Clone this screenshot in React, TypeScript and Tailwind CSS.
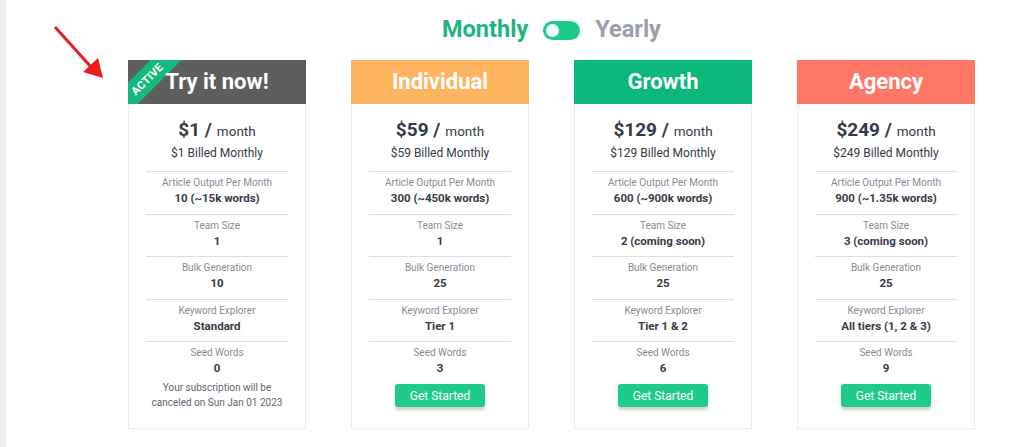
import React from "react";

type Plan = {
  name: string;
  color: string;
  price: string;
  active?: boolean;
  rows: [string, string][];
};

const plans: Plan[] = [
  {
    name: "Try it now!",
    color: "bg-[#5e5e5e]",
    price: "$1",
    active: true,
    rows: [
      ["Article Output Per Month", "10 (~15k words)"],
      ["Team Size", "1"],
      ["Bulk Generation", "10"],
      ["Keyword Explorer", "Standard"],
      ["Seed Words", "0"],
    ],
  },
  {
    name: "Individual",
    color: "bg-[#ffb45f]",
    price: "$59",
    rows: [
      ["Article Output Per Month", "300 (~450k words)"],
      ["Team Size", "1"],
      ["Bulk Generation", "25"],
      ["Keyword Explorer", "Tier 1"],
      ["Seed Words", "3"],
    ],
  },
  {
    name: "Growth",
    color: "bg-[#0cb77c]",
    price: "$129",
    rows: [
      ["Article Output Per Month", "600 (~900k words)"],
      ["Team Size", "2 (coming soon)"],
      ["Bulk Generation", "25"],
      ["Keyword Explorer", "Tier 1 & 2"],
      ["Seed Words", "6"],
    ],
  },
  {
    name: "Agency",
    color: "bg-[#ff7867]",
    price: "$249",
    rows: [
      ["Article Output Per Month", "900 (~1.35k words)"],
      ["Team Size", "3 (coming soon)"],
      ["Bulk Generation", "25"],
      ["Keyword Explorer", "All tiers (1, 2 & 3)"],
      ["Seed Words", "9"],
    ],
  },
];

function Card({ plan }: { plan: Plan }) {
  return (
    <div className="flex flex-col">
      <div
        className={`relative overflow-hidden h-[44px] ${plan.color} flex items-center justify-center`}
      >
        {plan.active && (
          <div className="absolute left-[-31px] top-[8px] w-[100px] h-[22px] bg-[#14b97d] -rotate-45 flex items-center justify-center">
            <span className="text-white text-[11px] font-bold tracking-[0.3px] leading-none">
              ACTIVE
            </span>
          </div>
        )}
        <span className="relative text-white font-bold text-[22px] leading-none">
          {plan.name}
        </span>
      </div>
      <div className="flex-1 border border-t-0 border-[#ececec] px-[17px] pt-[12px] flex flex-col items-center text-center">
        <div className="leading-[28px] text-[#343a48]">
          <span className="text-[19px] font-bold">{plan.price} /</span>
          <span className="text-[13.5px] ml-[5px]">month</span>
        </div>
        <div className="text-[12px] leading-[16px] text-[#343a48]">
          {plan.price} Billed Monthly
        </div>
        <div className="w-full mt-[10px]">
          {plan.rows.map(([label, value], i) => (
            <div
              key={label}
              className={`border-t border-[#dedede] pt-[3px] ${
                i === plan.rows.length - 1 ? "pb-0" : "pb-[7.5px]"
              }`}
            >
              <div className="text-[10px] leading-[15px] text-[#868c97]">{label}</div>
              <div className="text-[11.5px] leading-[16px] font-bold text-[#363b47]">
                {value}
              </div>
            </div>
          ))}
        </div>
        {plan.active ? (
          <div className="mt-[4px] pb-[17px] text-[10px] leading-[15px] text-[#5f6570] whitespace-nowrap">
            Your subscription will be
            <br />
            canceled on Sun Jan 01 2023
          </div>
        ) : (
          <button className="mt-[8px] mb-[21px] w-[90px] h-[23px] rounded-[3px] bg-[#1fcb8b] text-white text-[12px] leading-none shadow-[0_3px_3px_rgba(0,0,0,0.18)]">
            Get Started
          </button>
        )}
      </div>
    </div>
  );
}

export default function App() {
  return (
    <div
      className="relative flex w-[1024px] h-[447px] bg-white overflow-hidden"
      style={{ fontFamily: "Roboto, 'Liberation Sans', sans-serif" }}
    >
      <div className="w-[6px] h-full bg-[#efefef]" />
      <div className="flex flex-col pl-[122px] pt-[18px]">
        <div className="w-[847px] h-[24px] flex items-center justify-center">
          <span className="text-[23.5px] font-bold text-[#1db67d] leading-none">Monthly</span>
          <div className="mx-[15px] w-[37px] h-[19px] rounded-full bg-[#1fcb8b] flex items-center pl-[3px]">
            <div className="w-[13px] h-[13px] rounded-full bg-white" />
          </div>
          <span className="text-[23.5px] font-bold text-[#9aa0ad] leading-none">Yearly</span>
        </div>
        <div className="mt-[18px] grid grid-cols-[178px_178px_178px_178px] gap-x-[45px] w-[847px]">
          {plans.map((p) => (
            <Card key={p.name} plan={p} />
          ))}
        </div>
      </div>
      <svg
        className="absolute left-[50px] top-[22px]"
        width="60"
        height="60"
        viewBox="0 0 60 60"
      >
        <line x1="5" y1="5" x2="42" y2="46" stroke="#ea1c1c" strokeWidth="3" />
        <polygon points="53,56 33,50 48,36" fill="#ea1c1c" />
      </svg>
    </div>
  );
}
